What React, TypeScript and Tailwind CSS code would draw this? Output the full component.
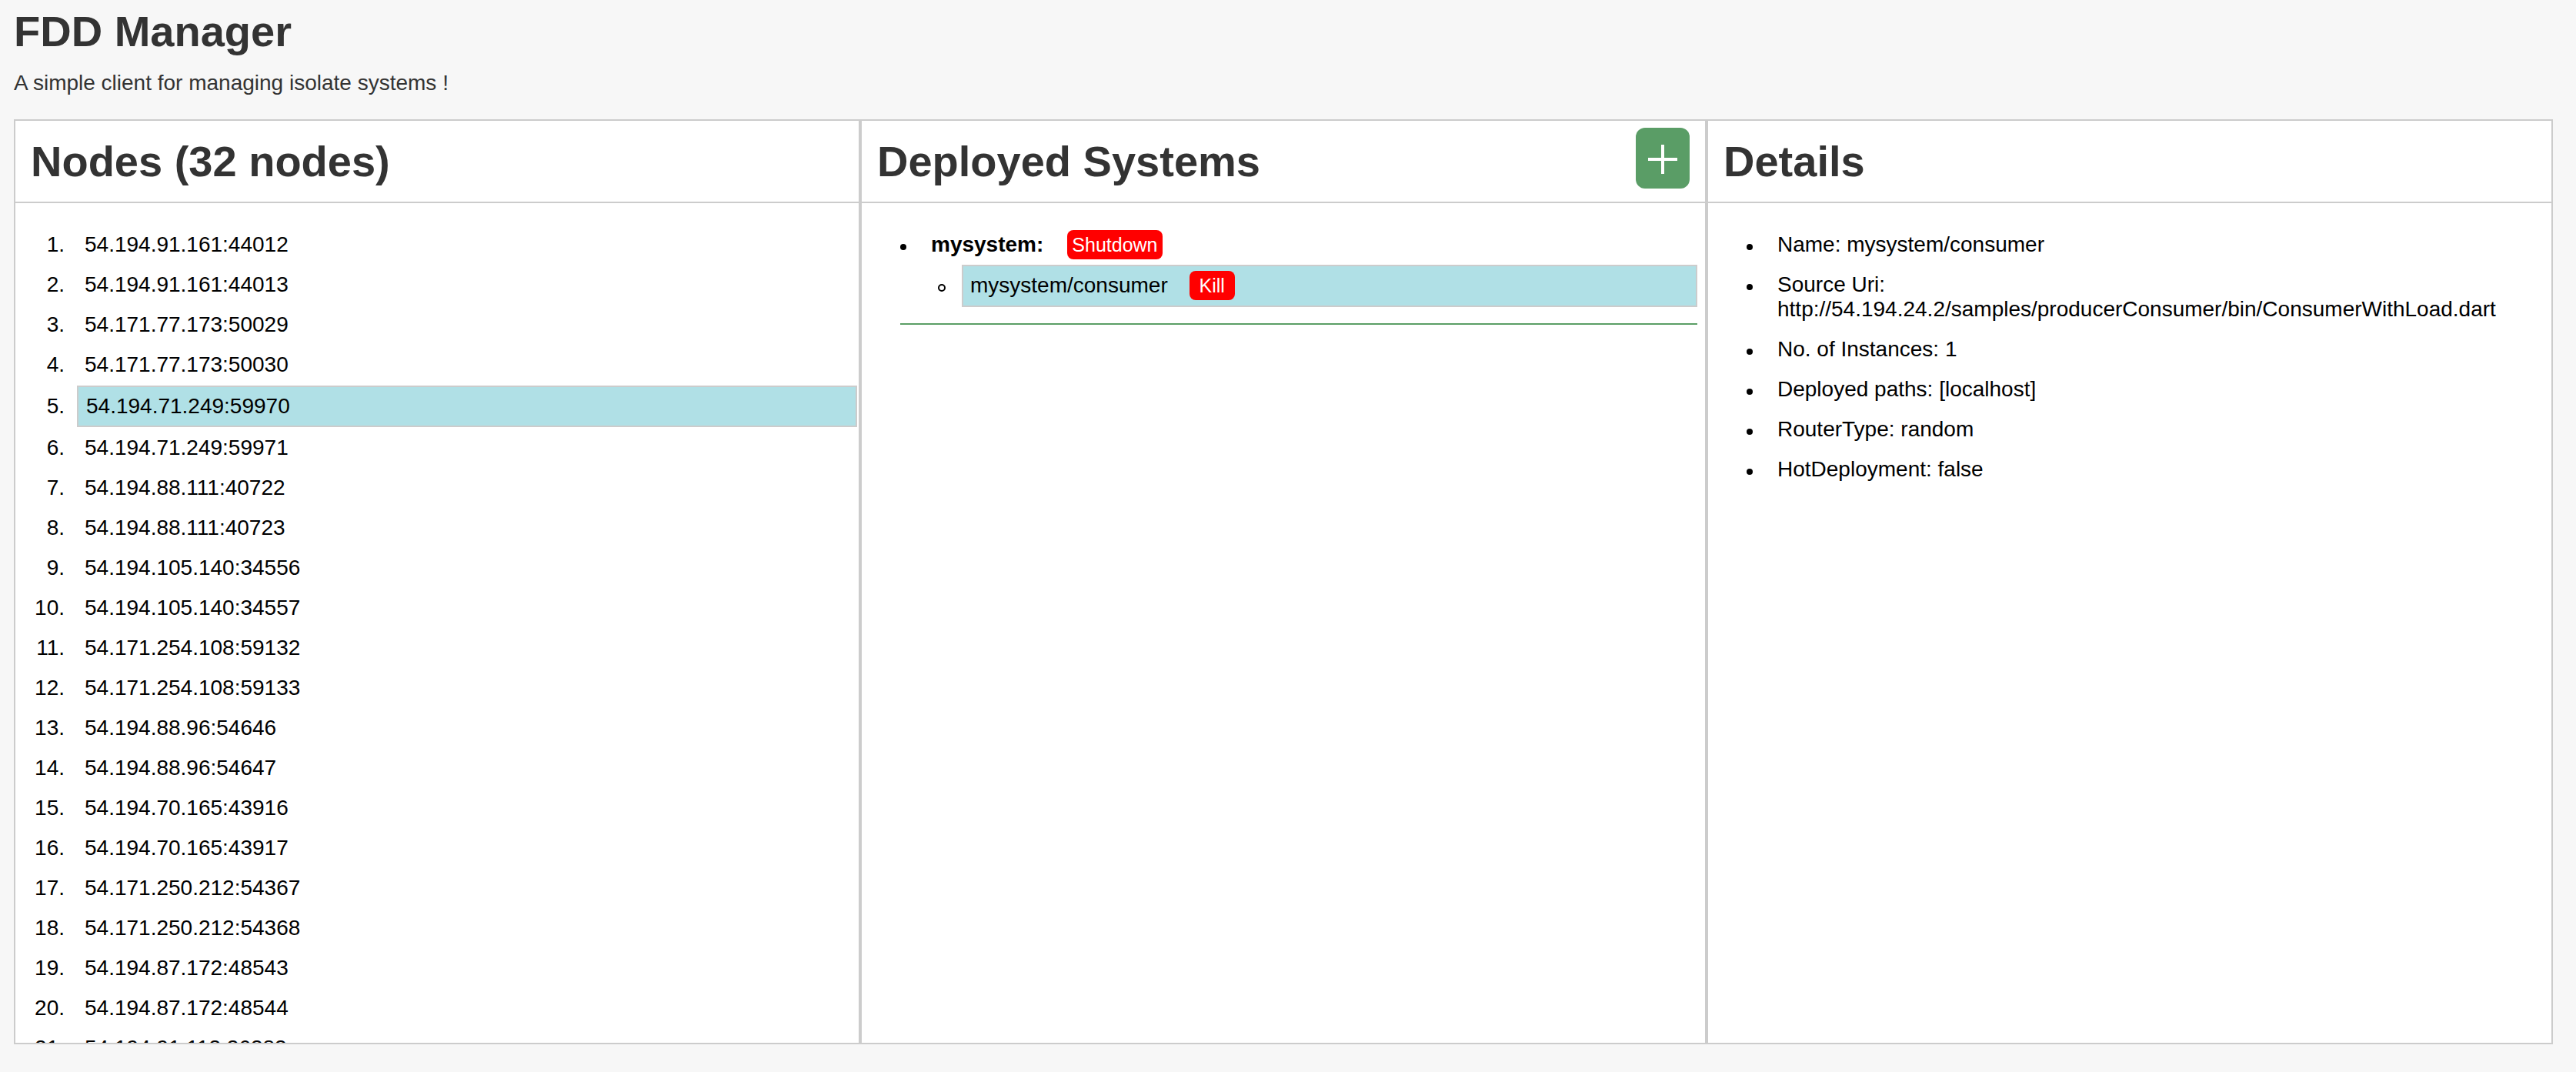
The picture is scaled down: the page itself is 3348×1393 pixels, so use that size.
import React from "react";

const nodes = [
  "54.194.91.161:44012",
  "54.194.91.161:44013",
  "54.171.77.173:50029",
  "54.171.77.173:50030",
  "54.194.71.249:59970",
  "54.194.71.249:59971",
  "54.194.88.111:40722",
  "54.194.88.111:40723",
  "54.194.105.140:34556",
  "54.194.105.140:34557",
  "54.171.254.108:59132",
  "54.171.254.108:59133",
  "54.194.88.96:54646",
  "54.194.88.96:54647",
  "54.194.70.165:43916",
  "54.194.70.165:43917",
  "54.171.250.212:54367",
  "54.171.250.212:54368",
  "54.194.87.172:48543",
  "54.194.87.172:48544",
  "54.194.91.113:36383",
  "54.194.91.113:36384",
  "54.171.80.21:41202",
  "54.171.80.21:41203",
  "54.194.62.37:52810",
  "54.194.62.37:52811",
  "54.171.92.140:38765",
  "54.171.92.140:38766",
  "54.194.99.201:47120",
  "54.194.99.201:47121",
  "54.171.66.18:33904",
  "54.171.66.18:33905",
];

const details = [
  "Name: mysystem/consumer",
  "Source Uri:",
  "No. of Instances: 1",
  "Deployed paths: [localhost]",
  "RouterType: random",
  "HotDeployment: false",
];

const Panel = ({
  title,
  action,
  children,
}: {
  title: string;
  action?: React.ReactNode;
  children: React.ReactNode;
}) => {
  return (
    <section className="flex h-[1202px] w-[1100px] shrink-0 flex-col border-2 border-[#ccc] bg-white">
      <div className="flex h-[107px] shrink-0 items-start justify-between border-b-2 border-[#ccc] px-[20px]">
        <h2 className="pt-[22px] text-[56px] font-bold leading-[1.1] text-[#333]">{title}</h2>
        {action}
      </div>
      <div className="flex-1 overflow-hidden pt-[28px] text-[28px] text-black">{children}</div>
    </section>
  );
};

export default function App() {
  return (
    <div className="min-h-screen bg-[#f7f7f7] pl-[18px] font-['Liberation_Sans',Arial,sans-serif] text-[#333]">
      <h1 className="pt-[10px] text-[56px] font-bold leading-[1.1]">FDD Manager</h1>
      <p className="mt-[16px] text-[28px] leading-[40px]">A simple client for managing isolate systems !</p>

      <div className="mt-[27px] flex">
        {/* nodes */}
        <Panel title="Nodes (32 nodes)">
          <ol>
            {nodes.map((n, i) => (
              <li key={n} className="flex items-center">
                <span className="w-[64px] shrink-0 py-[10px] text-right leading-[32px]">{i + 1}.</span>
                {i === 4 ? (
                  <span className="my-[1px] ml-[16px] mr-[2px] flex-1 border-2 border-[#ccc] bg-[#b0e0e6] py-[9px] pl-[10px] leading-[32px]">
                    {n}
                  </span>
                ) : (
                  <span className="ml-[16px] mr-[2px] flex-1 py-[10px] pl-[10px] leading-[32px]">{n}</span>
                )}
              </li>
            ))}
          </ol>
        </Panel>

        {/* deployed systems */}
        <Panel
          title="Deployed Systems"
          action={
            <button className="mt-[9px] flex h-[79px] w-[70px] items-center justify-center rounded-[12px] bg-[#5a9d66]">
              <svg width="38" height="38" viewBox="0 0 38 38" className="translate-y-[2px]">
                <path d="M19 0v38M0 19h38" stroke="white" strokeWidth="4" />
              </svg>
            </button>
          }
        >
          <div className="ml-[50px] mr-[10px]">
            <div className="flex h-[52px] items-center">
              <span className="h-[8px] w-[8px] shrink-0 translate-y-[3px] rounded-full bg-black" />
              <span className="ml-[32px] font-bold leading-[32px]">mysystem:</span>
              <span className="ml-[31px] h-[38px] rounded-[8px] bg-[#ff0000] px-[6px] text-[25px] leading-[38px] text-white">
                Shutdown
              </span>
            </div>
            <div className="flex items-center">
              <span className="ml-[49px] h-[10px] w-[10px] shrink-0 translate-y-[3px] rounded-full border-2 border-black" />
              <div className="ml-[21px] flex h-[55px] flex-1 items-center border-2 border-[#ccc] bg-[#b0e0e6] pl-[9px]">
                <span className="leading-[32px]">mysystem/consumer</span>
                <span className="ml-[28px] h-[38px] min-w-[59px] rounded-[8px] bg-[#ff0000] text-center text-[25px] leading-[38px] text-white">
                  Kill
                </span>
              </div>
            </div>
            <div className="mt-[21px] h-[2px] bg-[#5a9e65]" />
          </div>
        </Panel>

        {/* details */}
        <Panel title="Details">
          <ul className="pr-[20px]">
            {details.map((d) => (
              <li key={d} className="flex items-start py-[10px] leading-[32px]">
                <span className="ml-[50px] mt-[15px] h-[8px] w-[8px] shrink-0 rounded-full bg-black" />
                <span className="ml-[32px] flex-1">
                  {d}
                  {d === "Source Uri:" && (
                    <>
                      {" "}
                      <span className="whitespace-nowrap">
                        http://54.194.24.2/samples/producerConsumer/bin/ConsumerWithLoad.dart
                      </span>
                    </>
                  )}
                </span>
              </li>
            ))}
          </ul>
        </Panel>
      </div>
    </div>
  );
}
